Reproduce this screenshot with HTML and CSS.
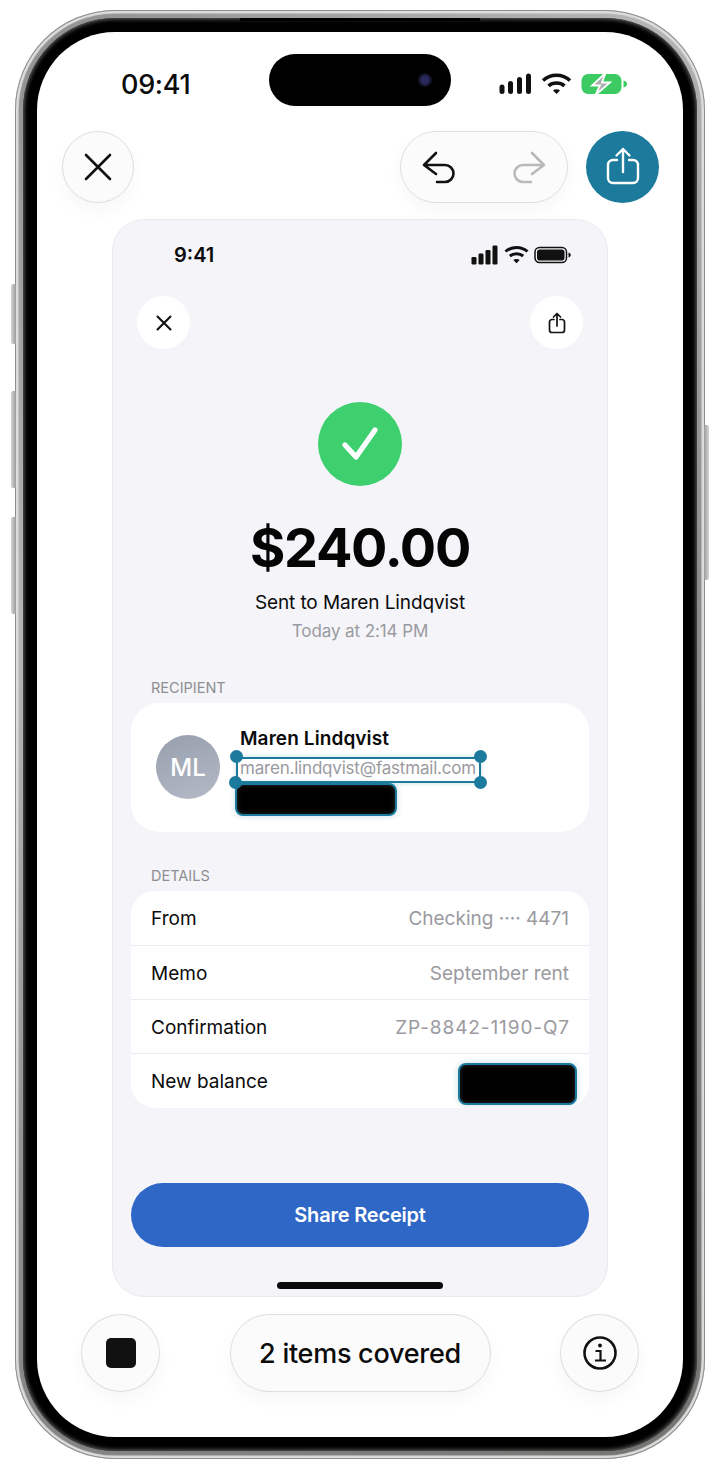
FILE: index.html
```html
<!DOCTYPE html>
<html lang="en">
<head>
  <meta charset="UTF-8" />
  <meta name="viewport" content="width=device-width, initial-scale=1.0"/>
  <title>Cover items</title>
  <link rel="stylesheet" href="styles.css">
</head>
<body>
  <div class="phone">
    <span class="side-btn side-mute"></span>
    <span class="side-btn side-up"></span>
    <span class="side-btn side-down"></span>
    <span class="side-btn side-power"></span>
    <span class="bezel-lip"></span>

    <div class="bezel">
      <div class="screen">
        <div class="island"><span class="lens"></span></div>

        <div class="status">
          <span class="status-time">09:41</span>
          <div class="status-icons">
            <svg width="33" height="22" viewBox="0 0 33 22" fill="#111">
              <rect x="0.500" y="11.500" width="5" height="9.500" rx="2.500"/>
              <rect x="9" y="8" width="5" height="13" rx="2.500"/>
              <rect x="18" y="4" width="5" height="17" rx="2.500"/>
              <rect x="27" y="0.500" width="5" height="20.500" rx="2.500"/>
            </svg>
            <svg width="31" height="22" viewBox="0 0 31 22" fill="none" stroke="#111" stroke-width="3.600">
              <path d="M2 7.500 C9.500 0.500 21.500 0.500 29 7.500"/>
              <path d="M7.500 12.800 C12 9 19 9 23.500 12.800"/>
              <path d="M12 17.500 L15.500 21 L19 17.500 C17 15.800 14 15.800 12 17.500Z" fill="#111" stroke="none"/>
            </svg>
            <svg width="46" height="22" viewBox="0 0 46 22">
              <rect x="0.500" y="1" width="40" height="20" rx="6.500" fill="#3ccb63"/>
              <path d="M42.500 7.500 C45 8 46 9.500 46 11 C46 12.500 45 14 42.500 14.500Z" fill="#3ccb63"/>
              <path d="M24.500 0 L11 12.500 H19 L14.500 22 L29 9.500 H21Z" fill="#a9adad" stroke="#fff" stroke-width="1.800"/>
            </svg>
          </div>
        </div>

        <div class="toolbar">
          <button class="glass round">
            <svg width="30" height="30" viewBox="0 0 30 30" fill="none" stroke="#111" stroke-width="2.600" stroke-linecap="round">
              <path d="M3 3 L27 27 M27 3 L3 27"/>
            </svg>
          </button>
          <div class="toolbar-right">
            <div class="glass history">
              <svg width="36" height="36" viewBox="0 0 36 36" fill="none" stroke="#111" stroke-width="2.600" stroke-linecap="round" stroke-linejoin="round">
                <path d="M16 4 L4 16 L16 25 M4 16 H25 A8.500 8.500 0 0 1 25 33 H17"/>
              </svg>
              <svg width="36" height="36" viewBox="0 0 36 36" fill="none" stroke="#b9b9b9" stroke-width="2.600" stroke-linecap="round" stroke-linejoin="round">
                <path d="M20 4 L32 16 L20 25 M32 16 H11 A8.500 8.500 0 0 0 11 33 H19"/>
              </svg>
            </div>
            <button class="share-main">
              <svg width="36" height="40" viewBox="0 0 36 40" fill="none" stroke="#fff" stroke-width="2.400" stroke-linecap="round" stroke-linejoin="round">
                <path d="M12 13 H8 A5 5 0 0 0 3 18 V31 A5 5 0 0 0 8 36 H28 A5 5 0 0 0 33 31 V18 A5 5 0 0 0 28 13 H24"/>
                <path d="M18 25 V2 M11.500 8.500 L18 2 L24.500 8.500"/>
              </svg>
            </button>
          </div>
        </div>

        <div class="receipt">
          <div class="receipt-status">
            <span class="receipt-time">9:41</span>
            <div class="receipt-icons">
              <svg width="28" height="20" viewBox="0 0 28 20" fill="#111">
                <rect x="0.500" y="12" width="5" height="7.500" rx="1.200"/>
                <rect x="7.500" y="8.500" width="5" height="11" rx="1.200"/>
                <rect x="14.500" y="5" width="5" height="14.500" rx="1.200"/>
                <rect x="21.500" y="0.500" width="5" height="19" rx="1.200"/>
              </svg>
              <svg width="25" height="20" viewBox="0 0 25 20" fill="none" stroke="#111" stroke-width="3">
                <path d="M1.500 6.500 C7.500 1 17.500 1 23.500 6.500"/>
                <path d="M5.800 11 C9.500 8 15.500 8 19.200 11"/>
                <path d="M9.300 15 L12.500 18.200 L15.700 15 C14 13.600 11 13.600 9.300 15Z" fill="#111" stroke="none"/>
              </svg>
              <svg width="37" height="18" viewBox="0 0 37 18">
                <rect x="1" y="1.500" width="31.500" height="15" rx="4.500" fill="none" stroke="#111" stroke-width="1.500"/>
                <rect x="3" y="3.500" width="27.500" height="11" rx="2.800" fill="#111"/>
                <path d="M34.500 6.500 C36 7 36.800 8 36.800 9 C36.800 10 36 11 34.500 11.500Z" fill="#111"/>
              </svg>
            </div>
          </div>

          <div class="receipt-nav">
            <button class="nav-btn">
              <svg width="18" height="18" viewBox="0 0 18 18" fill="none" stroke="#111" stroke-width="2.100" stroke-linecap="round">
                <path d="M2.500 2.500 L15.500 15.500 M15.500 2.500 L2.500 15.500"/>
              </svg>
            </button>
            <button class="nav-btn">
              <svg width="18" height="22" viewBox="0 0 36 44" fill="none" stroke="#111" stroke-width="3.400" stroke-linecap="round" stroke-linejoin="round">
                <path d="M12 15 H8 A5 5 0 0 0 3 20 V36 A5 5 0 0 0 8 41 H28 A5 5 0 0 0 33 36 V20 A5 5 0 0 0 28 15 H24"/>
                <path d="M18 28 V3 M11 10 L18 3 L25 10"/>
              </svg>
            </button>
          </div>

          <div class="check">
            <svg width="84" height="84" viewBox="0 0 84 84" fill="none" stroke="#fff" stroke-width="5.200" stroke-linecap="round" stroke-linejoin="round">
              <path d="M27 43 L38 55 L57 28"/>
            </svg>
          </div>

          <div class="amount">$240.00</div>
          <div class="sent">Sent to Maren Lindqvist</div>
          <div class="when">Today at 2:14 PM</div>

          <div class="section-label first">RECIPIENT</div>
          <div class="recipient">
            <div class="avatar">ML</div>
            <div class="recipient-info">
              <div class="recipient-name">Maren Lindqvist</div>
              <div class="recipient-email">
                <span class="email-text">maren.lindqvist@fastmail.com</span>
                <div class="selection">
                  <span class="handle tl"></span>
                  <span class="handle tr"></span>
                  <span class="handle bl"></span>
                  <span class="handle br"></span>
                </div>
              </div>
              <div class="redact redact-phone"></div>
            </div>
          </div>

          <div class="section-label">DETAILS</div>
          <div class="details">
            <div class="row">
              <span>From</span>
              <span class="row-value">Checking ···· 4471</span>
            </div>
            <div class="row">
              <span>Memo</span>
              <span class="row-value">September rent</span>
            </div>
            <div class="row">
              <span>Confirmation</span>
              <span class="row-value row-code">ZP-8842-1190-Q7</span>
            </div>
            <div class="row">
              <span>New balance</span>
              <div class="redact redact-balance"></div>
            </div>
          </div>

          <button class="share-receipt">Share Receipt</button>
          <div class="home-bar"></div>
        </div>

        <div class="bottom-bar">
          <button class="glass round-lg">
            <span class="stop"></span>
          </button>
          <div class="glass count">2 items covered</div>
          <button class="glass round-lg">
            <svg width="36" height="36" viewBox="0 0 36 36" fill="none" stroke="#111" stroke-width="2.600">
              <circle cx="18" cy="18" r="15.500"/>
              <path d="M13.500 16 H18.500 V25 M13 25.500 H24" stroke-width="2.200"/>
              <circle cx="18" cy="10.500" r="1.900" fill="#111" stroke="none"/>
            </svg>
          </button>
        </div>
      </div>
    </div>
  </div>
</body>
</html>
```

FILE: styles.css
```css
* {
  box-sizing: border-box;
}

html, body {
  margin: 0;
  background: #fff;
}

body {
  font-family: Inter, 'Noto Sans', sans-serif;
  color: #0b0b0b;
  padding: 10px 15px;
}

button {
  font-family: inherit;
  padding: 0;
  border: none;
  cursor: pointer;
}

/* device frame */
.phone {
  position: relative;
  width: 690px;
  height: 1449px;
  padding: 8px;
  border-radius: 100px;
  background: linear-gradient(135deg, #8f8f8f, #b5b5b5 30%, #8a8a8a 60%, #737370);
  box-shadow: inset 0 0 0 1px #8e8e8e, inset 0 0 1px 3.500px #dedede;
}

.side-btn {
  position: absolute;
  width: 5px;
  background: linear-gradient(90deg, #d6d6d6, #9a9a9a);
  border-radius: 2px 0 0 2px;
}

.side-mute { left: -4px; top: 274px; height: 60px; }
.side-up { left: -4px; top: 381px; height: 97px; }
.side-down { left: -4px; top: 507px; height: 97px; }

.side-power {
  right: -4px;
  top: 415px;
  height: 155px;
  background: linear-gradient(270deg, #d6d6d6, #9a9a9a);
  border-radius: 0 2px 2px 0;
}

.bezel-lip {
  position: absolute;
  left: 225px;
  top: 8px;
  width: 240px;
  height: 3px;
  background: #000;
}

.bezel {
  height: 100%;
  padding: 14px;
  background: #000;
  border-radius: 92px;
  box-shadow: inset 0 0 4px 1px #666;
}

.screen {
  position: relative;
  height: 100%;
  background: #fff;
  border-radius: 78px;
  overflow: hidden;
}

.island {
  position: absolute;
  left: 232px;
  top: 22px;
  width: 182px;
  height: 52px;
  border-radius: 26px;
  background: #000;
}

.lens {
  position: absolute;
  right: 19px;
  top: 19px;
  width: 14px;
  height: 14px;
  border-radius: 50%;
  background: radial-gradient(circle, #2b2a5e 30%, #0d0d1c 70%);
}

/* outer status bar */
.status {
  display: flex;
  justify-content: space-between;
  align-items: center;
  height: 36px;
  margin-top: 34px;
  padding: 0 56px 0 84px;
}

.status-time {
  font-size: 27px;
  font-weight: 500;
  letter-spacing: -0.3px;
}

.status-icons {
  display: flex;
  align-items: center;
  gap: 9px;
}

/* editor toolbar */
.toolbar {
  display: flex;
  justify-content: space-between;
  margin-top: 29px;
  padding: 0 24px 0 25px;
}

.toolbar-right {
  display: flex;
  gap: 18px;
}

.glass {
  display: flex;
  align-items: center;
  justify-content: center;
  background: #fbfbfb;
  border: 1px solid #dedede;
  box-shadow: 0 8px 18px rgba(0, 0, 0, 0.035);
}

.round {
  width: 72px;
  height: 72px;
  border-radius: 50%;
}

.history {
  justify-content: space-between;
  width: 168px;
  height: 72px;
  padding: 0 19px;
  border-radius: 36px;
}

.share-main {
  display: flex;
  align-items: center;
  justify-content: center;
  width: 73px;
  height: 72px;
  border-radius: 50%;
  background: #1c7a9c;
}

/* receipt being edited */
.receipt {
  width: 496px;
  height: 1078px;
  margin: 16px 0 0 75px;
  padding: 23px 18px 0;
  background: #f4f4f9;
  border: 1px solid #e9e9ed;
  border-radius: 32px;
}

.receipt-status {
  display: flex;
  justify-content: space-between;
  align-items: center;
  height: 24px;
  padding: 0 18px 0 43px;
}

.receipt-time {
  font-size: 20px;
  font-weight: 600;
}

.receipt-icons {
  display: flex;
  align-items: center;
  gap: 5px;
}

.receipt-nav {
  display: flex;
  justify-content: space-between;
  margin-top: 29px;
  padding: 0 6px;
}

.nav-btn {
  display: flex;
  align-items: center;
  justify-content: center;
  width: 53px;
  height: 53px;
  border-radius: 50%;
  background: #fff;
}

.check {
  width: 84px;
  height: 84px;
  margin: 53px auto 0;
  border-radius: 50%;
  background: #3ecf6e;
}

.amount {
  margin-top: 30px;
  font-size: 54px;
  line-height: 64px;
  font-weight: 700;
  letter-spacing: -1.3px;
  text-align: center;
  color: #050505;
}

.sent {
  margin-top: 11px;
  font-size: 19px;
  line-height: 24px;
  letter-spacing: -0.1px;
  text-align: center;
}

.when {
  margin-top: 5px;
  font-size: 17px;
  line-height: 22px;
  letter-spacing: -0.1px;
  color: #9a9a9f;
  text-align: center;
}

.section-label {
  margin-top: 35px;
  padding-left: 20px;
  font-size: 14.500px;
  line-height: 18px;
  color: #8e8e93;
}

.section-label.first {
  margin-top: 37px;
}

.recipient {
  display: flex;
  align-items: flex-start;
  gap: 20px;
  height: 129px;
  margin-top: 6px;
  padding: 32px 25px 0;
  background: #fff;
  border-radius: 28px;
}

.avatar {
  display: flex;
  align-items: center;
  justify-content: center;
  flex-shrink: 0;
  width: 64px;
  height: 64px;
  border-radius: 50%;
  background: linear-gradient(160deg, #979fad, #b4bac6);
  color: #fff;
  font-size: 24px;
  font-weight: 500;
}

.recipient-info {
  margin-top: -8px;
}

.recipient-name {
  font-size: 19px;
  line-height: 24px;
  font-weight: 600;
  letter-spacing: 0.1px;
}

.recipient-email {
  position: relative;
  width: fit-content;
  margin-top: 7px;
  font-size: 17px;
  line-height: 20px;
  letter-spacing: -0.200px;
  color: #9a9a9f;
}

.selection {
  position: absolute;
  left: -4px;
  right: -5px;
  top: -1px;
  bottom: -5px;
  border: 2px solid #1c7a9c;
  border-radius: 3px;
  box-shadow: 0 0 5px rgba(28, 122, 156, 0.25);
}

.handle {
  position: absolute;
  width: 13px;
  height: 13px;
  border-radius: 50%;
  background: #1c7a9c;
}

.handle.tl { left: -8px; top: -9px; }
.handle.tr { right: -8px; top: -9px; }
.handle.bl { left: -9px; bottom: -8px; }
.handle.br { right: -8px; bottom: -8px; }

.redact {
  background: #000;
  border: 2px solid #1c7a9c;
  border-radius: 8px;
  box-shadow: 0 0 6px rgba(28, 122, 156, 0.25), inset 0 0 5px #2b2b2b;
}

.redact-phone {
  width: 162px;
  height: 33px;
  margin: 5px 0 0 -5px;
}

.redact-balance {
  width: 119px;
  height: 42px;
  margin: 4px -8px 0 0;
}

.details {
  margin-top: 6px;
  background: #fff;
  border-radius: 24px;
  overflow: hidden;
}

.row {
  display: flex;
  justify-content: space-between;
  align-items: center;
  height: 54px;
  padding: 1px 20px 0;
  font-size: 19px;
  border-bottom: 1px solid #ececef;
}

.row:first-child {
  height: 55px;
}

.row:last-child {
  border-bottom: none;
}

.row-value {
  color: #9a9a9f;
}

.row-code {
  letter-spacing: 0.9px;
  margin-right: -1px;
}

.share-receipt {
  display: block;
  width: 100%;
  height: 64px;
  margin-top: 75px;
  border-radius: 32px;
  background: #2f67c6;
  color: #fff;
  font-size: 20px;
  font-weight: 600;
  letter-spacing: -0.200px;
}

.home-bar {
  width: 166px;
  height: 7px;
  margin: 35px auto 0;
  border-radius: 4px;
  background: #0b0b0b;
}

/* bottom controls */
.bottom-bar {
  display: flex;
  justify-content: space-between;
  margin-top: 17px;
  padding: 0 44px;
}

.round-lg {
  width: 79px;
  height: 78px;
  border-radius: 50%;
}

.stop {
  width: 30px;
  height: 30px;
  border-radius: 5px;
  background: #111;
}

.count {
  width: 261px;
  height: 78px;
  padding-top: 1px;
  border-radius: 39px;
  font-size: 27px;
  font-weight: 500;
  letter-spacing: -0.270px;
}
```
